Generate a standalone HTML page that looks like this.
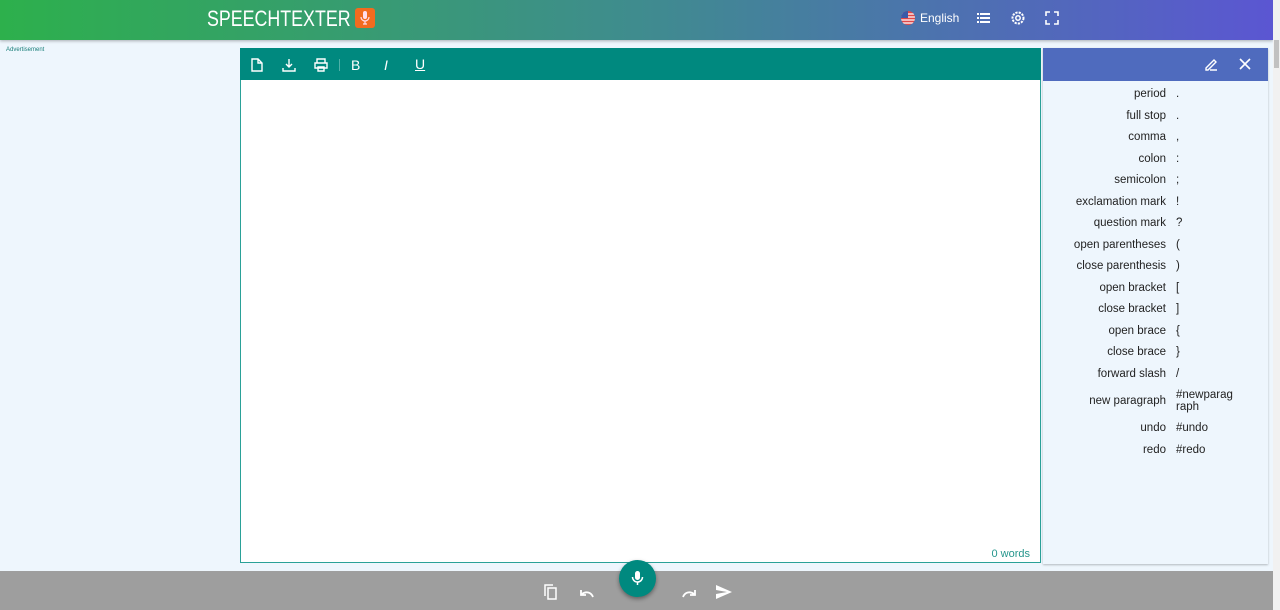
<!DOCTYPE html>
<html><head><style>
*{margin:0;padding:0;box-sizing:border-box}
body{width:1280px;height:610px;overflow:hidden;background:#eef6fd;font-family:"Liberation Sans",Arial,sans-serif;position:relative}
.hdr{position:absolute;left:0;top:0;width:1273px;height:40px;background:linear-gradient(90deg,#2db04c 0%,#3f8c8e 50%,#5b56d2 100%);box-shadow:0 1px 3px rgba(0,0,0,.3)}
.logo{position:absolute;left:207px;top:6px;color:#fff;font-size:22px;transform:scaleX(0.81);transform-origin:0 0;white-space:nowrap}
.mic{position:absolute;left:355px;top:8px;width:20px;height:20px;background:#f26b1f;border-radius:3px}
.sb{position:absolute;right:0;top:0;width:7px;height:610px;background:#f1f1f1}
.sb i{position:absolute;left:1px;top:40px;width:5px;height:28px;background:#c1c1c1}
.ad{position:absolute;left:6px;top:47px;font-size:6px;color:#1a7f7a}
.tb{position:absolute;left:240px;top:48px;width:801px;height:33px;background:#00897f}
.ed{position:absolute;left:240px;top:80px;width:801px;height:483px;background:#fff;border:1px solid #2aa198;border-top:none}
.wc{position:absolute;right:10px;bottom:2px;font-size:11px;color:#26968d}
.rp{position:absolute;left:1043px;top:48px;width:225px;height:516px;background:#eef6fd;box-shadow:0 1px 2px rgba(0,0,0,.25)}
.rh{height:33px;background:#4f6bbe;position:relative}
.row{position:absolute;font-size:11.5px;color:#222}
.l{position:absolute;right:102px;text-align:right;white-space:nowrap}
.v{position:absolute;left:133px;white-space:nowrap}
.bot{position:absolute;left:0;top:571px;width:1273px;height:39px;background:#9e9e9e}
.fab{position:absolute;left:619px;top:560px;width:37px;height:37px;border-radius:50%;background:#00897f;box-shadow:0 2px 4px rgba(0,0,0,.4)}
svg{position:absolute}
</style></head><body>
<div class="hdr">
<div class="logo">SPEECHTEXTER</div>
<div class="mic"><svg width="20" height="20" viewBox="0 0 20 20" style="left:0;top:0"><rect x="8" y="3" width="4" height="8" rx="2" fill="#fde"/><path d="M6 9a4 4 0 0 0 8 0M10 13v3M8 16h4" stroke="#fde" stroke-width="1.2" fill="none"/></svg></div>
<svg width="16" height="16" style="left:900px;top:10px"><defs><clipPath id="c"><circle cx="8" cy="8" r="7"/></clipPath></defs><g clip-path="url(#c)"><rect width="16" height="16" fill="#e04848"/><path d="M0 4h16M0 7h16M0 10h16M0 13h16" stroke="#fff" stroke-width="1.2"/><rect width="8" height="8" fill="#3a5aa8"/></g></svg>
<div style="position:absolute;left:920px;top:11px;color:#fff;font-size:12px">English</div>
<svg width="14" height="12" style="left:977px;top:12px" fill="#fff"><rect x="0" y="1" width="2" height="2"/><rect x="3" y="1" width="10" height="2"/><rect x="0" y="5" width="2" height="2"/><rect x="3" y="5" width="10" height="2"/><rect x="0" y="9" width="2" height="2"/><rect x="3" y="9" width="10" height="2"/></svg>
<svg width="16" height="16" style="left:1010px;top:10px"><circle cx="8" cy="8" r="5.5" fill="none" stroke="#fff" stroke-width="2" stroke-dasharray="2.2 1.1"/><circle cx="8" cy="8" r="2.2" fill="none" stroke="#fff" stroke-width="1.5"/></svg>
<svg width="14" height="14" style="left:1045px;top:11px" fill="none" stroke="#fff" stroke-width="1.6"><path d="M1 5V1h4M9 1h4v4M13 9v4H9M5 13H1V9"/></svg>
</div>
<div class="sb"><i></i></div>
<div class="ad">Advertisement</div>
<div class="tb">
<svg width="14" height="14" style="left:10px;top:10px" fill="none" stroke="#fff" stroke-width="1.4"><path d="M2 1h6l4 4v8H2z M8 1v4h4"/></svg>
<svg width="14" height="14" style="left:42px;top:10px" fill="none" stroke="#fff" stroke-width="1.4"><path d="M7 1v8M4 6l3 3 3-3M1 10v3h12v-3"/></svg>
<svg width="14" height="14" style="left:74px;top:10px" fill="none" stroke="#fff" stroke-width="1.4"><path d="M3 5V1h8v4M1 5h12v5H1zM4 9h6v4H4z"/></svg>
<div style="position:absolute;left:99px;top:11px;width:1px;height:12px;background:#4fb0a8"></div>
<div style="position:absolute;left:111px;top:9px;color:#fff;font-size:14px">B</div>
<div style="position:absolute;left:144px;top:9px;color:#fff;font-size:14px;font-style:italic">I</div>
<div style="position:absolute;left:175px;top:8px;color:#fff;font-size:14px;text-decoration:underline">U</div>
</div>
<div class="ed"><div class="wc">0 words</div></div>
<div class="rp"><div class="rh">
<svg width="14" height="14" style="left:161px;top:9px" fill="none" stroke="#fff" stroke-width="1.4"><path d="M2 11l8-8 2 2-8 8H2zM6 13h7"/></svg>
<svg width="12" height="12" style="left:196px;top:10px" stroke="#fff" stroke-width="1.6"><path d="M1 1l10 10M11 1L1 11"/></svg>
</div>
<div class="row" style="top:40px;left:0;width:225px">
<div style="position:relative">
<div class="l" style="top:0">period</div><div class="v" style="top:0">.</div>
<div class="l" style="top:21.5px">full stop</div><div class="v" style="top:21.5px">.</div>
<div class="l" style="top:43px">comma</div><div class="v" style="top:43px">,</div>
<div class="l" style="top:64.5px">colon</div><div class="v" style="top:64.5px">:</div>
<div class="l" style="top:86px">semicolon</div><div class="v" style="top:86px">;</div>
<div class="l" style="top:107.5px">exclamation mark</div><div class="v" style="top:107.5px">!</div>
<div class="l" style="top:129px">question mark</div><div class="v" style="top:129px">?</div>
<div class="l" style="top:150.5px">open parentheses</div><div class="v" style="top:150.5px">(</div>
<div class="l" style="top:172px">close parenthesis</div><div class="v" style="top:172px">)</div>
<div class="l" style="top:193.5px">open bracket</div><div class="v" style="top:193.5px">[</div>
<div class="l" style="top:215px">close bracket</div><div class="v" style="top:215px">]</div>
<div class="l" style="top:236.5px">open brace</div><div class="v" style="top:236.5px">{</div>
<div class="l" style="top:258px">close brace</div><div class="v" style="top:258px">}</div>
<div class="l" style="top:279.5px">forward slash</div><div class="v" style="top:279.5px">/</div>
<div class="l" style="top:307px">new paragraph</div><div class="v" style="top:301px;line-height:12px">#newparag<br>raph</div>
<div class="l" style="top:334px">undo</div><div class="v" style="top:334px">#undo</div>
<div class="l" style="top:356px">redo</div><div class="v" style="top:356px">#redo</div>
</div></div>
</div>
<div class="bot">
<svg width="14" height="16" style="left:544px;top:13px" fill="none" stroke="#fff" stroke-width="1.5"><path d="M1 12V1h8M4 4h8v11H4z"/></svg>
<svg width="16" height="10" style="left:579px;top:17px" fill="none" stroke="#fff" stroke-width="1.8"><path d="M14 9C12 4 7 3 3 6M2 2v5h5"/></svg>
<svg width="16" height="10" style="left:681px;top:17px" fill="none" stroke="#fff" stroke-width="1.8"><path d="M2 9C4 4 9 3 13 6M14 2v5H9"/></svg>
<svg width="16" height="14" style="left:716px;top:14px" fill="#fff"><path d="M0 0l16 7-16 7 0-5 11-2-11-2z"/></svg>
</div>
<div class="fab"><svg width="37" height="37" style="left:0;top:0"><rect x="16" y="11" width="5" height="9" rx="2.5" fill="#fff"/><path d="M13.5 17a5 5 0 0 0 10 0M18.5 22v3" stroke="#fff" stroke-width="1.5" fill="none"/></svg></div>
</body></html>
